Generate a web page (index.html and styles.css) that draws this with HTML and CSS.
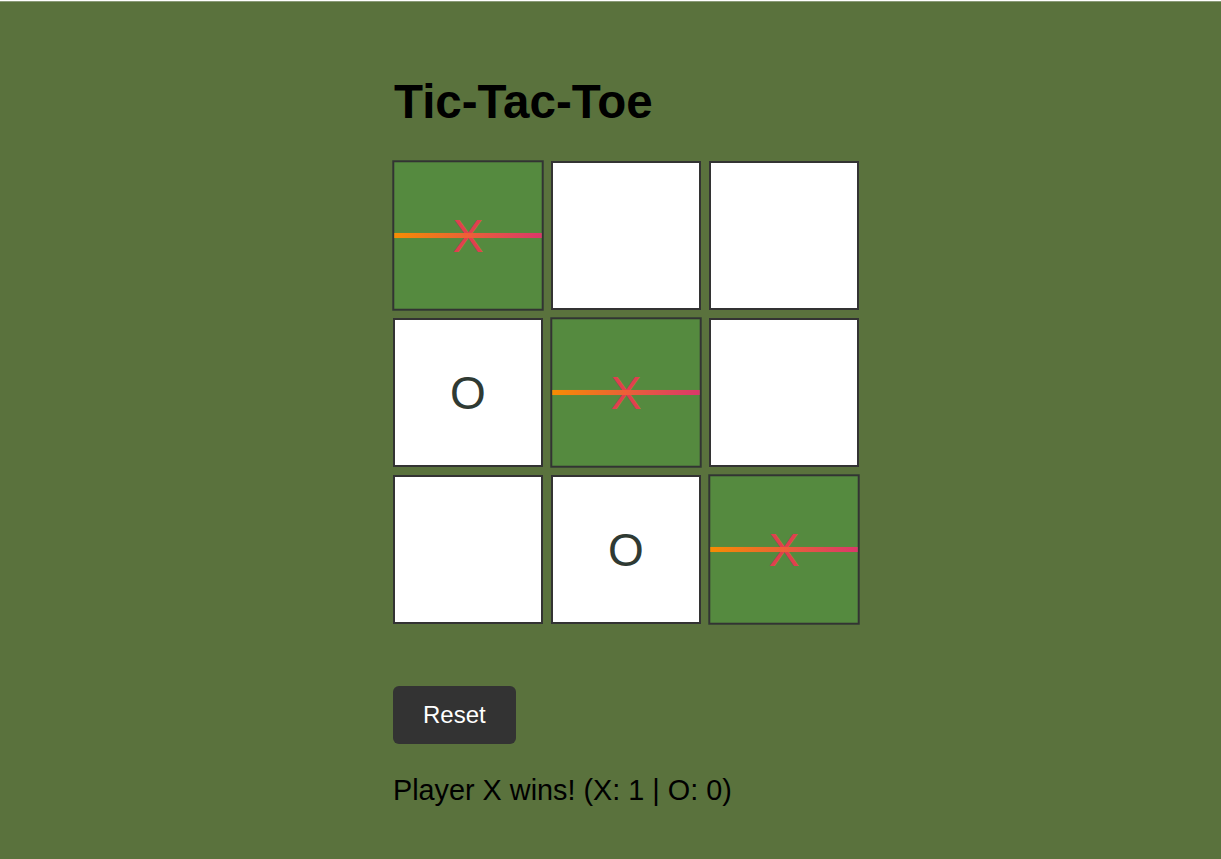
FILE: index.html
```html
<!DOCTYPE html>
<html>
<head>
<meta charset="utf-8">
<title>Tic-Tac-Toe</title>
<link rel="stylesheet" href="styles.css">
</head>
<body>
<main class="game">
  <h1 class="title">Tic-Tac-Toe</h1>
  <div class="board">
    <div class="cell win"><span class="mark x">X</span><span class="strike"></span></div>
    <div class="cell"></div>
    <div class="cell"></div>
    <div class="cell"><span class="mark o">O</span></div>
    <div class="cell win"><span class="mark x">X</span><span class="strike"></span></div>
    <div class="cell"></div>
    <div class="cell"></div>
    <div class="cell"><span class="mark o">O</span></div>
    <div class="cell win"><span class="mark x">X</span><span class="strike"></span></div>
  </div>
  <button class="reset">Reset</button>
  <p class="status">Player X wins! (X: 1 | O: 0)</p>
</main>
</body>
</html>
```
FILE: styles.css
```css
html {
  background: #ffffff;
}
body {
  margin: 0;
  margin-top: 1px;
  min-height: 858px;
  background: #5a723d;
  border-top: 1px solid #8a9a78;
  box-sizing: border-box;
  font-family: "Liberation Sans", Arial, sans-serif;
  color: #000;
}
.game {
  width: 435px;
  margin: 0 auto;
  padding-top: 73px;
  display: flex;
  flex-direction: column;
  align-items: flex-start;
}
.title {
  margin: 0 0 0 1px;
  font-size: 47.5px;
  font-weight: bold;
  line-height: 53px;
}
.board {
  margin-top: 33px;
  display: grid;
  grid-template-columns: repeat(3, 150px);
  grid-auto-rows: 149px;
  gap: 8px;
}
.cell {
  position: relative;
  box-sizing: border-box;
  border: 2px solid #333;
  background: #ffffff;
  display: flex;
  align-items: center;
  justify-content: center;
}
.cell.win {
  background: #558a3f;
  transform: scale(1.01);
}
.mark {
  font-size: 46px;
  line-height: 1;
}
.mark.o {
  color: #2f3a33;
}
.mark.x {
  color: #e0404e;
}
.strike {
  position: absolute;
  left: 0;
  right: 0;
  top: 50%;
  height: 5px;
  margin-top: -3px;
  background: linear-gradient(to right, #ff8c00, #e2336d);
  opacity: 0.95;
}
.reset {
  margin-top: 62px;
  padding: 15px 30px;
  background: #333;
  color: #fff;
  border: none;
  border-radius: 6px;
  font-family: "Liberation Sans", Arial, sans-serif;
  font-size: 24px;
  line-height: 28px;
}
.status {
  margin: 29px 0 0;
  font-size: 28.8px;
  line-height: 34px;
}
```
